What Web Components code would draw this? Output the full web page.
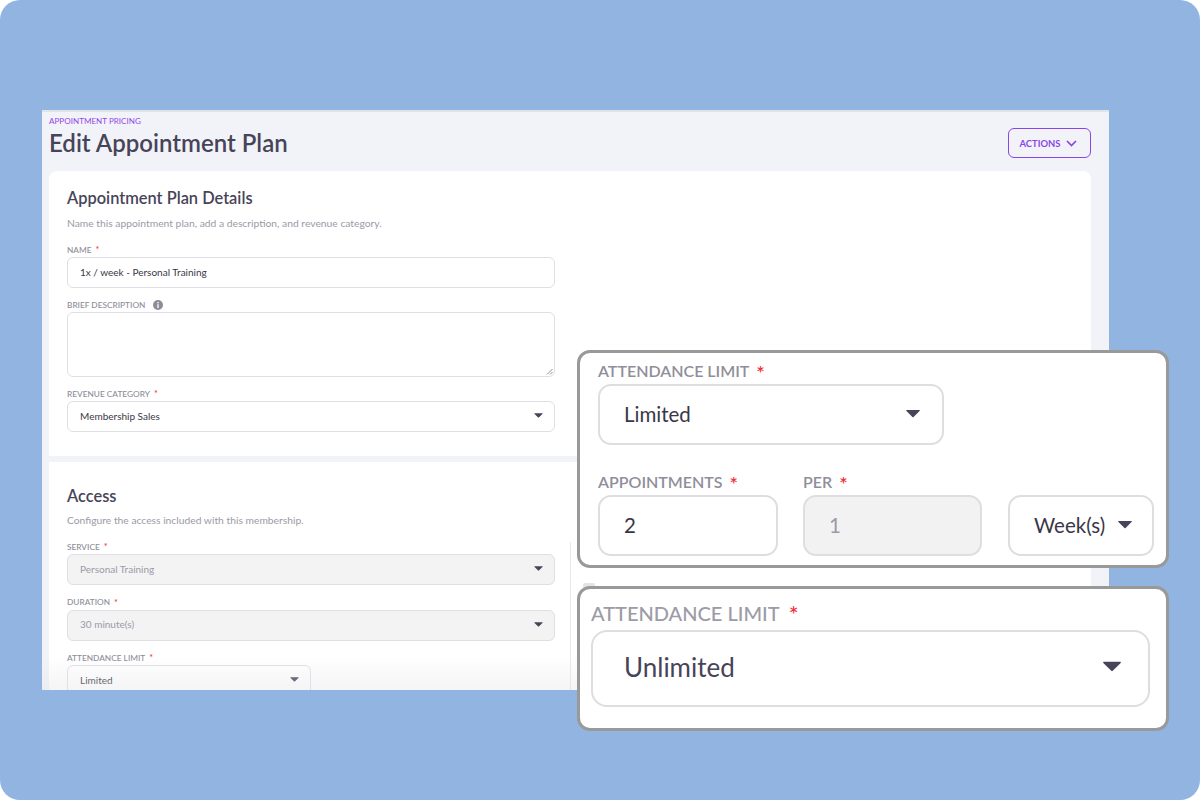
<!DOCTYPE html>
<html>
<head>
<meta charset="utf-8">
<title>Edit Appointment Plan</title>
<style>
  html, body { margin: 0; background: #fff; }
  body { font-family: Lato, "Noto Sans", sans-serif; color: #474459; }
</style>
</head>
<body>

<promo-stage>
  <plan-window>
    <page-head slot="head" crumb="APPOINTMENT PRICING" title="Edit Appointment Plan"></page-head>

    <form-card heading="Appointment Plan Details" hint="Name this appointment plan, add a description, and revenue category.">
      <form-field label="NAME" required><field-box value="1x / week - Personal Training"></field-box></form-field>
      <form-field label="BRIEF DESCRIPTION" info><field-box tall></field-box></form-field>
      <form-field label="REVENUE CATEGORY" required><field-box select value="Membership Sales"></field-box></form-field>
    </form-card>

    <form-card access heading="Access" hint="Configure the access included with this membership.">
      <form-field label="SERVICE" required><field-box select disabled value="Personal Training"></field-box></form-field>
      <form-field label="DURATION" required><field-box select disabled value="30 minute(s)"></field-box></form-field>
      <form-field label="ATTENDANCE LIMIT" required narrow><field-box select value="Limited"></field-box></form-field>
    </form-card>
  </plan-window>

  <zoom-callout style="left:577px;top:350px;width:592px;height:218px;--pad:7px 0 0 18px">
    <callout-field label="ATTENDANCE LIMIT" style="width:346px">
      <callout-box select value="Limited" style="height:61px;padding-right:22px"></callout-box>
    </callout-field>
    <div style="display:flex;margin-top:26px">
      <callout-field label="APPOINTMENTS" style="flex:none;width:180px;margin-right:25px">
        <callout-box value="2" style="height:61px"></callout-box>
      </callout-field>
      <callout-field label="PER" style="flex:none;width:179px;margin-right:26px">
        <callout-box disabled value="1" style="height:61px"></callout-box>
      </callout-field>
      <callout-field style="flex:none;width:146px">
        <callout-box select value="Week(s)" style="height:61px;padding-right:20px"></callout-box>
      </callout-field>
    </div>
  </zoom-callout>

  <zoom-callout style="left:577px;top:586px;width:592px;height:145px;--pad:11px 0 0 11px">
    <callout-field big label="ATTENDANCE LIMIT" style="width:559px">
      <callout-box big select value="Unlimited" style="height:77px"></callout-box>
    </callout-field>
  </zoom-callout>
</promo-stage>

<script>
const ARROW = `<svg width="12" height="7" viewBox="0 0 12 7" aria-hidden="true"><path d="M.6.4h10.8c.4 0 .6.4.4.7L6.5 6.4c-.3.3-.7.3-1 0L.2 1.1C0 .8.2.4.6.4z" fill="currentColor"/></svg>`

class PromoStage extends HTMLElement {
  constructor() {
    super()
    this.attachShadow({ mode: 'open' })
    this.shadowRoot.innerHTML = `
      <style>
        :host {
          display: block;
          position: relative;
          box-sizing: border-box;
          width: 1200px;
          height: 800px;
          padding: 110px 91px 110px 42px;
          background: #91b4e1;
          border-radius: 20px;
          overflow: hidden;
        }
      </style>
      <slot></slot>`
  }
}

class PlanWindow extends HTMLElement {
  constructor() {
    super()
    this.attachShadow({ mode: 'open' })
    this.shadowRoot.innerHTML = `
      <style>
        :host {
          display: block;
          position: relative;
          height: 580px;
          box-sizing: border-box;
          padding: 0 18px 0 7px;
          background: #f2f3f8;
          border-top: 2px solid #e0e3ea;
          overflow: hidden;
        }
        .fade {
          position: absolute;
          left: 0; right: 0; bottom: 0;
          height: 34px;
          background: linear-gradient(rgba(225,225,230,0), rgba(225,225,230,.35));
        }
      </style>
      <slot name="head"></slot>
      <slot></slot>
      <div class="fade"></div>`
  }
}

class PageHead extends HTMLElement {
  connectedCallback() {
    if (this.shadowRoot) return
    this.attachShadow({ mode: 'open' })
    this.shadowRoot.innerHTML = `
      <style>
        :host { display: flex; justify-content: space-between; height: 59px; }
        .crumb { font-size: 8.1px; line-height: 10px; margin-top: 4px; color: #9147ea; }
        h1 { margin: 2px 0 0; font-size: 24px; line-height: 30px; font-weight: 600; color: #474459; }
        button {
          all: unset;
          box-sizing: border-box;
          display: flex;
          align-items: center;
          gap: 6px;
          width: 83px;
          height: 30px;
          margin-top: 16px;
          padding-left: 10.5px;
          border: 1.5px solid #8a45ea;
          border-radius: 6px;
          font-size: 9.4px;
          font-weight: 700;
          color: #8a45ea;
        }
        svg { flex: none; }
      </style>
      <div>
        <div class="crumb">${this.getAttribute('crumb')}</div>
        <h1>${this.getAttribute('title')}</h1>
      </div>
      <button>ACTIONS
        <svg width="11" height="7" viewBox="0 0 11 7"><path d="M1 1l4.5 4.6L10 1" fill="none" stroke="currentColor" stroke-width="1.7"/></svg>
      </button>`
  }
}

class FormCard extends HTMLElement {
  connectedCallback() {
    if (this.shadowRoot) return
    this.attachShadow({ mode: 'open' })
    this.shadowRoot.innerHTML = `
      <style>
        :host {
          display: block;
          position: relative;
          background: #fff;
          padding: 17px 18px 13px;
          border-radius: 8px 8px 0 0;
          --field-gap: 11px;
        }
        :host([access]) {
          border-radius: 0;
          margin-top: 6px;
          padding-top: 24px;
          height: 300px;
          --field-gap: 11.5px;
        }
        h2 { margin: 0; font-size: 16.4px; line-height: 20px; font-weight: 600; color: #474459; }
        p { margin: 8px 0 14px; font-size: 10.3px; line-height: 14px; color: #9b9aa6; }
        :host([access]) p { margin-top: 7px; }
        .rule, .nub { display: none; position: absolute; }
        .rule { left: 521px; top: 80px; bottom: 0; width: 1px; background: #e8e8ec; }
        .nub { left: 534px; top: 121px; width: 12px; height: 6px; border-radius: 2px; background: #e4e4e8; }
        :host([access]) .rule, :host([access]) .nub { display: block; }
      </style>
      <h2>${this.getAttribute('heading')}</h2>
      <p>${this.getAttribute('hint')}</p>
      <slot></slot>
      <div class="rule"></div>
      <div class="nub"></div>`
  }
}

class FormField extends HTMLElement {
  connectedCallback() {
    if (this.shadowRoot) return
    this.attachShadow({ mode: 'open' })
    const star = this.hasAttribute('required') ? '<span class="star">*</span>' : ''
    const info = this.hasAttribute('info')
      ? `<svg class="info" width="10" height="10" viewBox="0 0 9 9"><circle cx="4.5" cy="4.5" r="4.5" fill="#8d8c98"/><rect x="3.9" y="3.8" width="1.2" height="3.4" fill="#fff"/><rect x="3.9" y="1.8" width="1.2" height="1.2" fill="#fff"/></svg>` : ''
    this.shadowRoot.innerHTML = `
      <style>
        :host { display: block; width: 488px; margin-bottom: var(--field-gap); }
        :host([narrow]) { width: 244px; }
        .label {
          display: flex;
          align-items: center;
          height: 11px;
          margin-bottom: 2px;
          font-size: 8.3px;
          font-weight: 500;
          color: #8d8c98;
        }
        .star { color: #f0313c; margin-left: 4px; font-size: 9px; }
        .info { margin-left: 8px; }
      </style>
      <div class="label">${this.getAttribute('label')}${star}${info}</div>
      <slot></slot>`
  }
}

class FieldBox extends HTMLElement {
  connectedCallback() {
    if (this.shadowRoot) return
    this.attachShadow({ mode: 'open' })
    const value = this.getAttribute('value') || ''
    const arrow = this.hasAttribute('select') ? ARROW : ''
    const grip = this.hasAttribute('tall')
      ? `<svg class="grip" width="7" height="7" viewBox="0 0 7 7"><path d="M1 6.5L6.5 1M4 6.5L6.5 4" stroke="#777" stroke-width=".8"/></svg>` : ''
    this.shadowRoot.innerHTML = `
      <style>
        :host {
          display: flex;
          position: relative;
          align-items: center;
          justify-content: space-between;
          box-sizing: border-box;
          height: 31px;
          padding: 0 11px 2px 12px;
          background: #fff;
          border: 1px solid #dfdfe4;
          border-radius: 6px;
          font-size: 10px;
          color: #393747;
        }
        :host([tall]) { height: 65px; }
        :host([disabled]) { background: #f3f3f4; color: #9b9aa6; }
        svg { color: #474459; flex: none; width: 9px; height: 5px; margin-right: 0; }
        .grip { position: absolute; right: 1px; bottom: 1px; width: 7px; height: 7px; }
      </style>
      <span>${value}</span>${arrow}${grip}`
  }
}

class ZoomCallout extends HTMLElement {
  constructor() {
    super()
    this.attachShadow({ mode: 'open' })
    this.shadowRoot.innerHTML = `
      <style>
        :host {
          display: block;
          position: absolute;
          box-sizing: border-box;
          padding: var(--pad);
          background: #fff;
          border: 3px solid #999;
          border-radius: 13px;
        }
      </style>
      <slot></slot>`
  }
}

class CalloutField extends HTMLElement {
  connectedCallback() {
    if (this.shadowRoot) return
    this.attachShadow({ mode: 'open' })
    const label = this.getAttribute('label')
    this.shadowRoot.innerHTML = `
      <style>
        :host { display: block; }
        .label {
          display: flex;
          align-items: center;
          height: 21px;
          margin-bottom: 3px;
          font-size: 16px;
          font-weight: 600;
          color: #8f8e9a;
        }
        :host([big]) .label { height: 26px; margin-bottom: 4px; font-size: 20px; font-weight: 500; color: #9c9ba6; }
        .star { color: #f0313c; margin: 2px 0 0 7px; font-size: 20px; }
        :host([big]) .star { margin-left: 9px; font-size: 23px; }
        :host(:not([label])) .label { visibility: hidden; }
      </style>
      <div class="label">${label || '&nbsp;'}<span class="star">${label ? '*' : ''}</span></div>
      <slot></slot>`
  }
}

class CalloutBox extends HTMLElement {
  connectedCallback() {
    if (this.shadowRoot) return
    this.attachShadow({ mode: 'open' })
    const arrow = this.hasAttribute('select') ? ARROW : ''
    this.shadowRoot.innerHTML = `
      <style>
        :host {
          display: flex;
          align-items: center;
          justify-content: space-between;
          box-sizing: border-box;
          padding: 0 24px 2px;
          background: #fff;
          border: 2px solid #dedee2;
          border-radius: 13px;
          font-size: 20.5px;
          color: #393747;
        }
        :host([big]) { padding: 0 27px 4px 31px; font-size: 26px; border-radius: 16px; color: #474459; }
        :host([disabled]) { background: #f2f2f2; color: #9b9aa6; }
        svg { color: #474459; flex: none; width: 14px; height: 9px; }
        :host([big]) svg { width: 18px; height: 11px; }
      </style>
      <span>${this.getAttribute('value')}</span>${arrow}`
  }
}

customElements.define('promo-stage', PromoStage)
customElements.define('plan-window', PlanWindow)
customElements.define('page-head', PageHead)
customElements.define('form-card', FormCard)
customElements.define('form-field', FormField)
customElements.define('field-box', FieldBox)
customElements.define('zoom-callout', ZoomCallout)
customElements.define('callout-field', CalloutField)
customElements.define('callout-box', CalloutBox)
</script>
</body>
</html>
